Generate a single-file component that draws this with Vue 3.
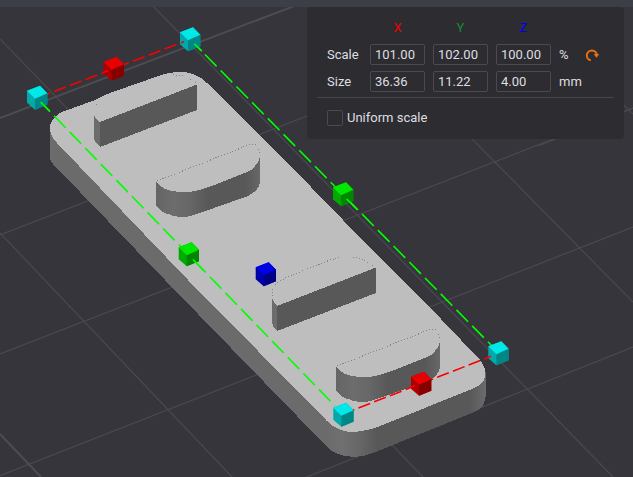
<script setup>
import { reactive, ref } from 'vue'

const axes = ['X', 'Y', 'Z']
const rows = reactive([
  { label: 'Scale', unit: '%', values: ['101.00', '102.00', '100.00'] },
  { label: 'Size', unit: 'mm', values: ['36.36', '11.22', '4.00'] },
])
const uniform = ref(false)

function resetScale() {
  rows[0].values = ['100.00', '100.00', '100.00']
}

const gridLines = [
  'M0 235L307 116M538 146L633 108',
  'M0 354L633 108',
  'M0 475.7L633 227',
  'M305 477.7L633 347',
  'M0 39L423 477',
  'M154 7L613 477',
  'M342 7L633 302',
  'M516 0L633 114',
  'M0 233L232 477',
]

const handles = [
  { x: 37, y: 97.7, kind: 'cyan' },
  { x: 190, y: 39.3, kind: 'cyan' },
  { x: 113.7, y: 68.7, kind: 'red' },
  { x: 343, y: 194.3, kind: 'green' },
  { x: 188.7, y: 254.3, kind: 'green' },
  { x: 265.7, y: 274.3, kind: 'blue' },
  { x: 498.3, y: 353.3, kind: 'cyan' },
  { x: 421, y: 383.7, kind: 'red' },
  { x: 343.3, y: 414.7, kind: 'cyan' },
]
</script>

<template>
  <main class="viewer">
    <div class="topbar"></div>
    <svg class="scene" viewBox="0 7 633 470" preserveAspectRatio="xMinYMin slice" role="img" aria-label="3D model">
      <defs>
        <linearGradient id="plateSide" gradientUnits="userSpaceOnUse" x1="327" y1="0" x2="485" y2="0">
          <stop offset="0" stop-color="#6b6b6b" />
          <stop offset="0.1" stop-color="#707070" />
          <stop offset="0.2" stop-color="#676767" />
          <stop offset="0.32" stop-color="#585858" />
          <stop offset="0.9" stop-color="#585858" />
          <stop offset="1" stop-color="#6a6a6a" />
        </linearGradient>
        <linearGradient id="ribSide" gradientUnits="userSpaceOnUse" x1="156" y1="0" x2="260" y2="0">
          <stop offset="0" stop-color="#656565" />
          <stop offset="0.17" stop-color="#6d6d6d" />
          <stop offset="0.32" stop-color="#676767" />
          <stop offset="0.5" stop-color="#585858" />
          <stop offset="0.86" stop-color="#585858" />
          <stop offset="1" stop-color="#686868" />
        </linearGradient>
      </defs>

      <g class="grid">
        <path v-for="d in gridLines" :key="d" :d="d" />
        <path class="major" d="M0 118L310 0M0 434L41 477" />
      </g>

      <g class="model">
        <path class="side" d="M50 128V158Q50 161 53 164L165 280L330 450L336 432L100 130Z" />
        <path fill="url(#plateSide)" d="M327 421V447Q332 452 337 453.500Q343 456 350 456.500H358Q366 456 373 453L472 413Q479 410 482 407Q485 402 485.500 397V372L380 400Z" />
        <path class="top" d="M50 128Q50 122 55 117Q58 114 62 112L95 100Q102 96 110 93L147 80L163 74.500Q171 72 180 72Q187 72 193 74Q201 77 207 83L280 155L343 220L442 320L480 360Q485 366 485.500 373Q485 380 482 383Q478 387 472 389L380 426Q373 429 367 430Q358 432 350 432Q342 431 337 428Q332 426 327 421L188 280L57 143Q50 136 50 128Z" />

        <path class="edge" d="M94 115L96 118.500L100 122V147L97 144L94 139Z" />
        <path class="front" d="M100 122L197 84.500V110L100 147Z" />
        <path class="dots" d="M96 105L99 101M173 74.500L183 76L190 79L196 83" />

        <g id="rib">
          <path fill="url(#ribSide)" d="M156 182L160 186Q164 189 170 190.500Q176 192 183 192Q192 192 200 190L213 185.500L247 172Q252 170 255 166Q259 162 260 156V182Q259 187 257 189Q254 193 248 196L197 214Q190 217 183 217Q175 217 170 214.500Q163 213 160 210L156 206Z" />
          <path class="dots" d="M157 181L250 144.500H256L260 153" />
        </g>

        <path class="edge" d="M272 298L274 302L277.500 306V331L274 328L272 322Z" />
        <path class="front" d="M277 306L376 267.500V293L277 331Z" />
        <path class="dots" d="M272 296L273 288L277 283L287 277L330 260L341 257M353 257L361 259L367 262L375 267" />

        <use href="#rib" transform="translate(180 185)" />
      </g>

      <g class="axis-lines">
        <path class="red" stroke-dashoffset="9.3" d="M47 94.300L109 70.500L183 42" />
        <path class="red" stroke-dashoffset="10" d="M352 410.500L490 356.700" />
        <path class="green" stroke-dashoffset="3.2" d="M40.700 102L335 406" />
        <path class="green" stroke-dashoffset="7.2" d="M194.300 43.700L492 346" />
      </g>

      <g v-for="(h, i) in handles" :key="i" :class="h.kind" :transform="`translate(${h.x} ${h.y})`">
        <path class="face-left" d="M-10 -7L3 -12L10.300 -4.500V7L-2 12L-10 5Z" />
        <path class="face-right" d="M-2 .7L10.300 -5V7L-2 12Z" />
        <path class="face-top" d="M-10 -7L3 -12L10.300 -4.500L-2 1Z" />
      </g>

      <g class="axis-lines over">
        <path class="green" d="M40.700 102L49.500 111M194.300 43.700L202 51.300M346.700 199L357 209.500M193 259.500L204 271" />
        <path class="red" d="M181 42.800L184 41.700M103 72.600L108 70.700M410 387.500L415 385.600M487 357.800L491 356.300" />
      </g>
    </svg>

    <section class="panel">
      <div class="fields">
        <span></span>
        <span v-for="a in axes" :key="a" class="axis" :class="'axis-' + a.toLowerCase()">{{ a }}</span>
        <span></span>
        <span></span>
        <template v-for="(row, r) in rows" :key="row.label">
          <label :for="`${row.label}-X`">{{ row.label }}</label>
          <input
            v-for="(a, i) in axes"
            :id="`${row.label}-${a}`"
            :key="a"
            v-model="row.values[i]"
            type="text"
            :aria-label="`${row.label} ${a}`"
          />
          <span class="unit">{{ row.unit }}</span>
          <button v-if="r === 0" class="reset" type="button" aria-label="Reset scale" @click="resetScale">
            <svg viewBox="0 0 14 14" width="14" height="14">
              <path d="M5.800 12.300A5 5 0 1 1 11.800 7" fill="none" stroke="#e8700e" stroke-width="2" />
              <path d="M8.800 6.600L11.500 5.200L14 6.600L11.600 9.800Z" fill="#e8700e" />
            </svg>
          </button>
          <span v-else></span>
        </template>
      </div>
      <hr />
      <label class="check">
        <input v-model="uniform" type="checkbox" />
        <span>Uniform scale</span>
      </label>
    </section>
  </main>
</template>

<style>
body {
  margin: 0;
  background: #36353b;
}
</style>

<style scoped>
.viewer {
  position: relative;
  display: flex;
  flex-direction: column;
  height: 100vh;
  overflow: hidden;
  background: #36353b;
  color: #dedee0;
  font: 13px/16px Roboto, 'Noto Sans', sans-serif;
}
.topbar {
  flex: none;
  height: 7px;
  background: #3b3f48;
}
.scene {
  display: block;
  flex: 1;
  width: 100%;
  min-height: 0;
}
.grid path {
  fill: none;
  stroke: #4a494f;
  stroke-width: 1.2;
}
.grid .major {
  stroke: #4d4c51;
  stroke-width: 2;
}
.model {
  shape-rendering: crispEdges;
}
.side { fill: #6b6b6b; }
.top { fill: #bebebe; }
.edge { fill: #6c6c6c; }
.front { fill: #585858; }
.dots {
  fill: none;
  stroke: #858585;
  stroke-width: 1;
  stroke-dasharray: 1 2;
}
.axis-lines {
  fill: none;
  stroke-width: 1.6;
}
.axis-lines .red {
  stroke: #f80000;
  stroke-dasharray: 12.5 4.4;
}
.axis-lines .green {
  stroke: #00ff00;
  stroke-dasharray: 16.6 5.8;
}
.axis-lines.over path {
  stroke-dasharray: none;
}
.cyan .face-top { fill: #00e8e8; }
.cyan .face-left { fill: #00aaaa; }
.cyan .face-right { fill: #008686; }
.red .face-top { fill: #e80000; }
.red .face-left { fill: #ae0000; }
.red .face-right { fill: #860000; }
.green .face-top { fill: #00e800; }
.green .face-left { fill: #00aa00; }
.green .face-right { fill: #008600; }
.blue .face-top { fill: #0000e8; }
.blue .face-left { fill: #0000aa; }
.blue .face-right { fill: #000086; }

.panel {
  position: absolute;
  top: 7px;
  right: 9px;
  box-sizing: border-box;
  padding: 10px 10px 13px;
  border-radius: 4px;
  background: #2d2c31;
}
.fields {
  display: grid;
  grid-template-columns: 35px repeat(3, 55px) 18px 14px;
  grid-template-rows: 21px 21px 21px;
  gap: 6px 8px;
  align-items: center;
  padding: 0 15px 0 10px;
}
.axis { text-align: center; }
.axis-x { color: #f00000; }
.axis-y { color: #0f8f3a; }
.axis-z { color: #0000f0; }
.unit { white-space: nowrap; }
.fields input {
  box-sizing: border-box;
  width: 100%;
  height: 21px;
  margin: 0;
  padding: 0 4px;
  border: 1px solid #4b4a51;
  border-radius: 2px;
  background: transparent;
  color: inherit;
  font: inherit;
}
.reset {
  display: block;
  width: 14px;
  height: 14px;
  padding: 0;
  border: 0;
  background: none;
  cursor: pointer;
}
.reset svg { display: block; }
hr {
  height: 1px;
  margin: 5px 0 12px;
  border: 0;
  background: #46454b;
}
.check {
  display: flex;
  align-items: center;
  gap: 4px;
  padding-left: 10px;
}
.check input {
  appearance: none;
  box-sizing: border-box;
  width: 16px;
  height: 16px;
  margin: 0;
  border: 1px solid #4b4a51;
  border-radius: 2px;
}
.check input:checked { background: #e8700e; }
</style>
